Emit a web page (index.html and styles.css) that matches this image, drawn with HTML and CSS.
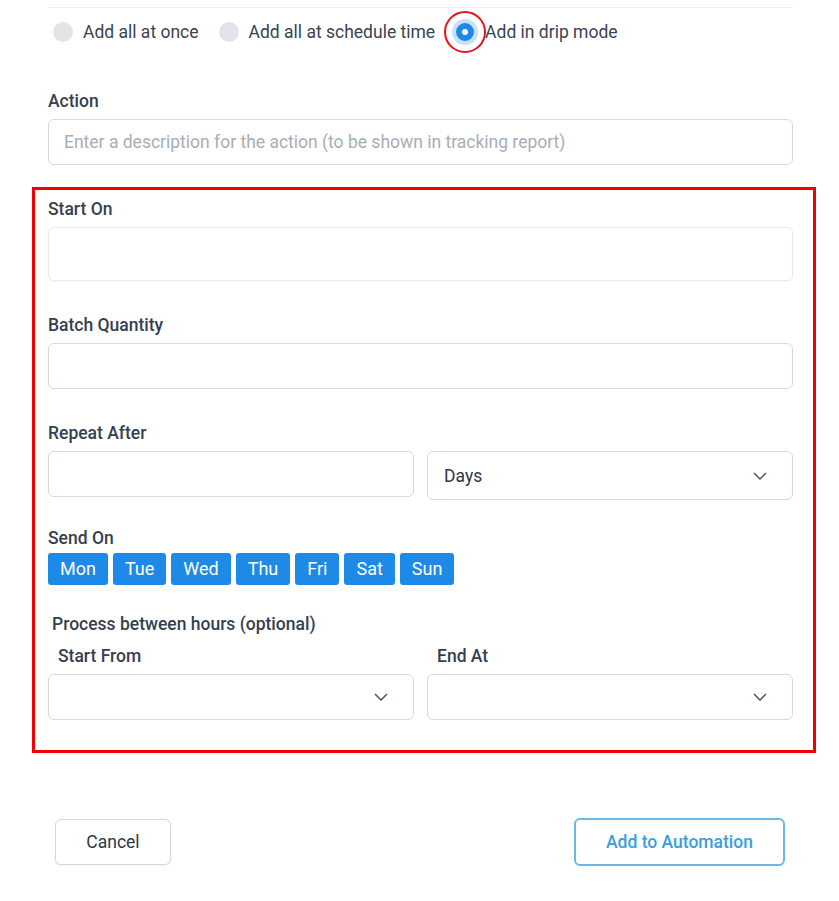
FILE: index.html
```html
<!DOCTYPE html>
<html>
<head>
<meta charset="utf-8">
<link rel="stylesheet" href="styles.css">
</head>
<body>
<div class="page">
  <div class="radios">
    <label class="radio"><span class="dot"></span>Add all at once</label>
    <label class="radio"><span class="dot"></span>Add all at schedule time</label>
    <label class="radio checked"><span class="dot"><span class="ring"></span></span>Add in drip mode</label>
  </div>

  <div class="field action">
    <div class="label">Action</div>
    <div class="input placeholder">Enter a description for the action (to be shown in tracking report)</div>
  </div>

  <div class="highlight">
    <div class="field">
      <div class="label">Start On</div>
      <div class="input tall"></div>
    </div>
    <div class="field gap">
      <div class="label">Batch Quantity</div>
      <div class="input"></div>
    </div>
    <div class="field gap">
      <div class="label">Repeat After</div>
      <div class="row">
        <div class="input"></div>
        <div class="input select big">Days<svg class="chev" width="14" height="8" viewBox="0 0 14 8"><path d="M1 1l6 6 6-6" fill="none" stroke="#4a5568" stroke-width="1.5"/></svg></div>
      </div>
    </div>
    <div class="field send">
      <div class="label">Send On</div>
      <div class="days">
        <span class="day">Mon</span><span class="day">Tue</span><span class="day">Wed</span><span class="day">Thu</span><span class="day">Fri</span><span class="day">Sat</span><span class="day">Sun</span>
      </div>
    </div>
    <div class="hours">
      <div class="label process">Process between hours (optional)</div>
      <div class="row">
        <div class="col">
          <div class="label sub">Start From</div>
          <div class="input select"><svg class="chev" width="14" height="8" viewBox="0 0 14 8"><path d="M1 1l6 6 6-6" fill="none" stroke="#4a5568" stroke-width="1.5"/></svg></div>
        </div>
        <div class="col">
          <div class="label sub">End At</div>
          <div class="input select"><svg class="chev" width="14" height="8" viewBox="0 0 14 8"><path d="M1 1l6 6 6-6" fill="none" stroke="#4a5568" stroke-width="1.5"/></svg></div>
        </div>
      </div>
    </div>
  </div>

  <div class="footer">
    <button class="btn cancel">Cancel</button>
    <button class="btn primary">Add to Automation</button>
  </div>
</div>
</body>
</html>
```

FILE: styles.css
```css
* { box-sizing: border-box; }
html, body { margin: 0; padding: 0; background: #fff; }
body {
  font-family: Roboto, "Liberation Sans", sans-serif;
  color: #2d3748;
  width: 839px;
  height: 901px;
  overflow: hidden;
}
.page {
  padding: 7px 46px 0 48px;
}
.radios {
  border-top: 1px solid #edf0f3;
  height: 49px;
  display: flex;
  align-items: center;
  padding-left: 5px;
  font-size: 17.5px;
  color: #3a4352;
}
.radio {
  display: flex;
  align-items: center;
  margin-right: 20px;
}
.radio .dot {
  width: 20px;
  height: 20px;
  border-radius: 50%;
  background: #e1e4e9;
  margin-right: 10px;
  position: relative;
  flex: none;
}
.radio.checked { margin-right: 0; }
.radio.checked .dot {
  width: 18px;
  height: 18px;
  margin: 0 11px 0 1px;
  background: #1e8ae8;
  box-shadow: 0 0 0 4px #c8e0f8;
}
.radio.checked .dot::after {
  content: "";
  position: absolute;
  left: 6px; top: 6px;
  width: 6px; height: 6px;
  border-radius: 50%;
  background: #fff;
}
.radio .ring {
  position: absolute;
  left: -12px; top: -12px;
  width: 42px; height: 42px;
  border: 2.5px solid #e8101a;
  border-radius: 50%;
}
.field.action { margin-top: 35px; }
.label {
  font-size: 17.5px;
  font-weight: 500;
  line-height: 20px;
  color: #353f4f;
  margin-bottom: 8px;
}
.input {
  height: 46px;
  border: 1px solid #d5d9e0;
  border-radius: 6px;
  background: #fff;
}
.input.placeholder {
  color: #a6aeb8;
  font-size: 17.5px;
  padding-left: 15px;
  line-height: 44px;
}
.input.tall {
  height: 54px;
  border-color: #e6e9ed;
  box-shadow: 0 1px 2px rgba(0,0,0,0.04);
}
.highlight {
  margin: 22px -23px 0 -16px;
  border: 3px solid #f20000;
  padding: 9px 20px 30px 13px;
}
.field.gap { margin-top: 34px; }
.row {
  display: grid;
  grid-template-columns: 1fr 1fr;
  column-gap: 13px;
  align-items: start;
}
.input.select {
  display: flex;
  align-items: center;
  padding: 0 25px 0 16px;
  font-size: 17.5px;
  color: #2d3748;
}
.input.select.big { height: 49px; }
.input.select .chev { margin-left: auto; }
.field.send { margin-top: 28px; }
.field.send .label { margin-bottom: 5px; }
.days { display: flex; gap: 5px; }
.day {
  background: #1e8ae8;
  color: #fff;
  font-size: 18px;
  height: 32px;
  line-height: 32px;
  padding: 0 12px;
  border-radius: 3px;
}
.hours { margin-top: 29px; }
.label.process { margin-left: 4px; margin-bottom: 12px; }
.label.sub { margin-left: 10px; }
.footer {
  display: flex;
  justify-content: space-between;
  align-items: flex-start;
  margin-top: 65px;
  padding: 0 8px 0 7px;
}
.btn {
  font-family: Roboto, "Liberation Sans", sans-serif;
  font-size: 17.5px;
  background: #fff;
  border-radius: 6px;
  cursor: pointer;
}
.btn.cancel {
  width: 116px;
  height: 46px;
  border: 1px solid #d3d7de;
  color: #2d3748;
  margin-top: 1px;
  box-shadow: 0 1px 2px rgba(0,0,0,0.05);
}
.btn.primary {
  width: 211px;
  height: 48px;
  border: 2px solid #6cb9e8;
  color: #3a9ee0;
  font-weight: 500;
}
```
